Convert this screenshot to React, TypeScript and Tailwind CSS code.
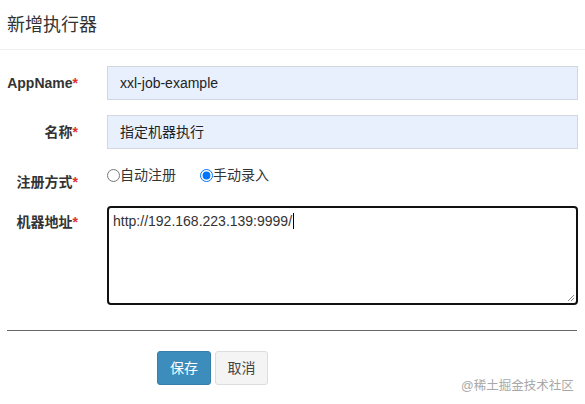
import React from "react";

const font = { fontFamily: '"Liberation Sans", Arial, "Noto Sans CJK SC", sans-serif' };

function Label({ text, className = "" }: { text: string; className?: string }) {
  return (
    <div className={`w-[78px] shrink-0 text-right text-[14px] font-bold leading-[20px] text-[#333] ${className}`}>
      {text}
      <span className="text-[#e0302b]">*</span>
    </div>
  );
}

export default function App() {
  return (
    <div className="relative h-[404px] w-[585px] overflow-hidden bg-white" style={font}>
      {/* header */}
      <div className="flex h-[50px] items-center border-b border-[#f0f0f0] px-[7px]">
        <h4 className="text-[18px] leading-[24px] text-[#333]">新增执行器</h4>
      </div>

      <div className="pt-[16px]">
        <div className="flex items-center">
          <Label text="AppName" />
          <div className="ml-[29px] flex h-[34px] w-[471px] items-center border border-[#d2d6de] bg-[#e8f0fe] px-[12px] text-[14px] text-[#222]">
            xxl-job-example
          </div>
        </div>

        <div className="mt-[15px] flex items-center">
          <Label text="名称" />
          <div className="ml-[29px] flex h-[34px] w-[471px] items-center border border-[#d2d6de] bg-[#e8f0fe] px-[12px] text-[14px] text-[#222]">
            指定机器执行
          </div>
        </div>

        <div className="mt-[15px] flex h-[27px] items-start">
          <Label text="注册方式" className="pt-[8px]" />
          <div className="ml-[29px] flex items-center pt-[1px] text-[14px] leading-[20px] text-[#333]">
            <label className="flex items-center">
              <input type="radio" name="addressType" className="m-0 h-[13px] w-[13px]" readOnly />
              <span>自动注册</span>
            </label>
            <label className="ml-[24px] flex items-center">
              <input type="radio" name="addressType" className="m-0 h-[13px] w-[13px] accent-[#0075ff]" defaultChecked />
              <span>手动录入</span>
            </label>
          </div>
        </div>

        <div className="mt-[15px] flex items-start">
          <Label text="机器地址" className="pt-[6px]" />
          <div className="relative ml-[29px] h-[99px] w-[471px] rounded-[4px] border-2 border-[#111] px-[4px] pt-[2px] text-[14px] leading-[20px] text-[#333]">
            http://192.168.223.139:9999/
            <span className="ml-[1px] inline-block h-[16px] w-[1px] translate-y-[3px] bg-black" />
            <svg className="absolute bottom-[1px] right-[1px]" width="9" height="9" viewBox="0 0 9 9">
              <path d="M8 2 L2 8 M8 5 L5 8" stroke="#888" strokeWidth="1" fill="none" />
            </svg>
          </div>
        </div>
      </div>

      <div className="mx-[7px] mt-[25px] w-[570px] border-t border-[#666]" />

      <div className="ml-[157px] mt-[20px] flex gap-[4px]">
        <button className="h-[34px] w-[54px] rounded-[3px] border border-[#367fa9] bg-[#3c8dbc] text-[14px] text-white">
          保存
        </button>
        <button className="h-[34px] w-[53px] rounded-[3px] border border-[#ddd] bg-[#f4f4f4] text-[14px] text-[#444]">
          取消
        </button>
      </div>

      <div className="absolute left-[461px] top-[377px] text-[12.5px] leading-[18px] text-[#a8a8a8]">
        @稀土掘金技术社区
      </div>
    </div>
  );
}
